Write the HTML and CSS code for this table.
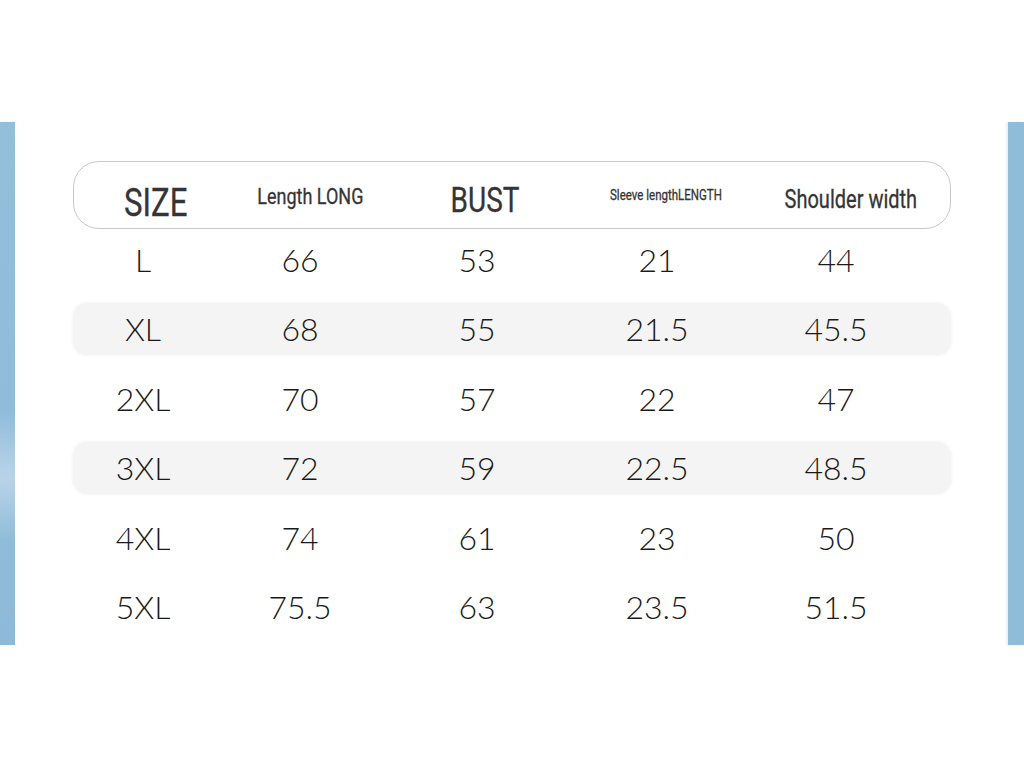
FILE: index.html
```html
<!DOCTYPE html>
<html lang="en">
<head>
<meta charset="utf-8">
<title>Size chart</title>
<link rel="stylesheet" href="styles.css">
</head>
<body>
<section class="band">
  <div class="strip strip-left"></div>
  <div class="sheet">
    <div class="chart">
      <div class="head">
        <div class="hc h-size"><span>SIZE</span></div>
        <div class="hc h-length"><span>Length LONG</span></div>
        <div class="hc h-bust"><span>BUST</span></div>
        <div class="hc h-sleeve"><span>Sleeve lengthLENGTH</span></div>
        <div class="hc h-shoulder"><span>Shoulder width</span></div>
      </div>
      <div class="rows">
        <div class="row"><span>L</span><span>66</span><span>53</span><span>21</span><span>44</span></div>
        <div class="row shade"><span>XL</span><span>68</span><span>55</span><span>21.5</span><span>45.5</span></div>
        <div class="row"><span>2XL</span><span>70</span><span>57</span><span>22</span><span>47</span></div>
        <div class="row shade"><span>3XL</span><span>72</span><span>59</span><span>22.5</span><span>48.5</span></div>
        <div class="row"><span>4XL</span><span>74</span><span>61</span><span>23</span><span>50</span></div>
        <div class="row"><span>5XL</span><span>75.5</span><span>63</span><span>23.5</span><span>51.5</span></div>
      </div>
    </div>
  </div>
  <div class="strip strip-right"></div>
</section>
</body>
</html>
```
FILE: styles.css
```css
html, body {
  margin: 0;
  padding: 0;
  background: #ffffff;
}
body {
  width: 1024px;
  height: 768px;
  overflow: hidden;
  font-family: "Lato", "Liberation Sans", sans-serif;
}
.band {
  margin-top: 122px;
  height: 523px;
  display: flex;
}
.strip {
  flex: none;
}
.strip-left {
  width: 15px;
  background: linear-gradient(180deg, #93bfdb 0%, #8fbcd9 55%, #b9d4e8 68%, #90bcd9 80%, #8dbad8 100%);
  box-shadow: 2px 0 2px #e3f1f8;
}
.strip-right {
  width: 16px;
  background: #8fbcd9;
  box-shadow: -2px 0 2px #e6f1f7;
}
.sheet {
  flex: 1;
  background: #ffffff;
  padding: 39px 57px 0 58px;
}
.chart {
  width: 878px;
}
.head {
  box-sizing: border-box;
  height: 68px;
  border: 1.5px solid #c9c9c9;
  border-radius: 26px;
  display: grid;
  grid-template-columns: 164px 144px 206px 156px 205px;
  align-items: center;
  font-family: "Roboto", "Liberation Sans", sans-serif;
  font-weight: 400;
  color: #353535;
  line-height: 1;
}
.hc {
  text-align: center;
}
.hc span {
  display: inline-block;
  transform: scaleX(0.8);
  white-space: nowrap;
  -webkit-text-stroke: 0.3px #353535;
}
.h-size { font-size: 39px; padding-top: 16px; }
.h-length { font-size: 22.5px; padding-top: 2px; }
.h-bust { font-size: 35px; padding-top: 10px; }
.h-sleeve { font-size: 14.4px; padding-top: 2px; }
.h-shoulder { font-size: 25px; padding-top: 8px; padding-left: 8px; }

.rows {
  margin-top: 5px;
  display: flex;
  flex-direction: column;
  gap: 17.4px;
}
.row {
  height: 52px;
  display: grid;
  grid-template-columns: 140px 174px 180px 180px 178px;
  align-items: center;
  font-size: 32px;
  font-weight: 300;
  color: #1a1a1a;
  line-height: 1;
  border-radius: 14px;
}
.row span {
  text-align: center;
}
.shade {
  background: #f4f4f4;
  box-shadow: 0 0 3px 1px #f6f6f6;
}
```
